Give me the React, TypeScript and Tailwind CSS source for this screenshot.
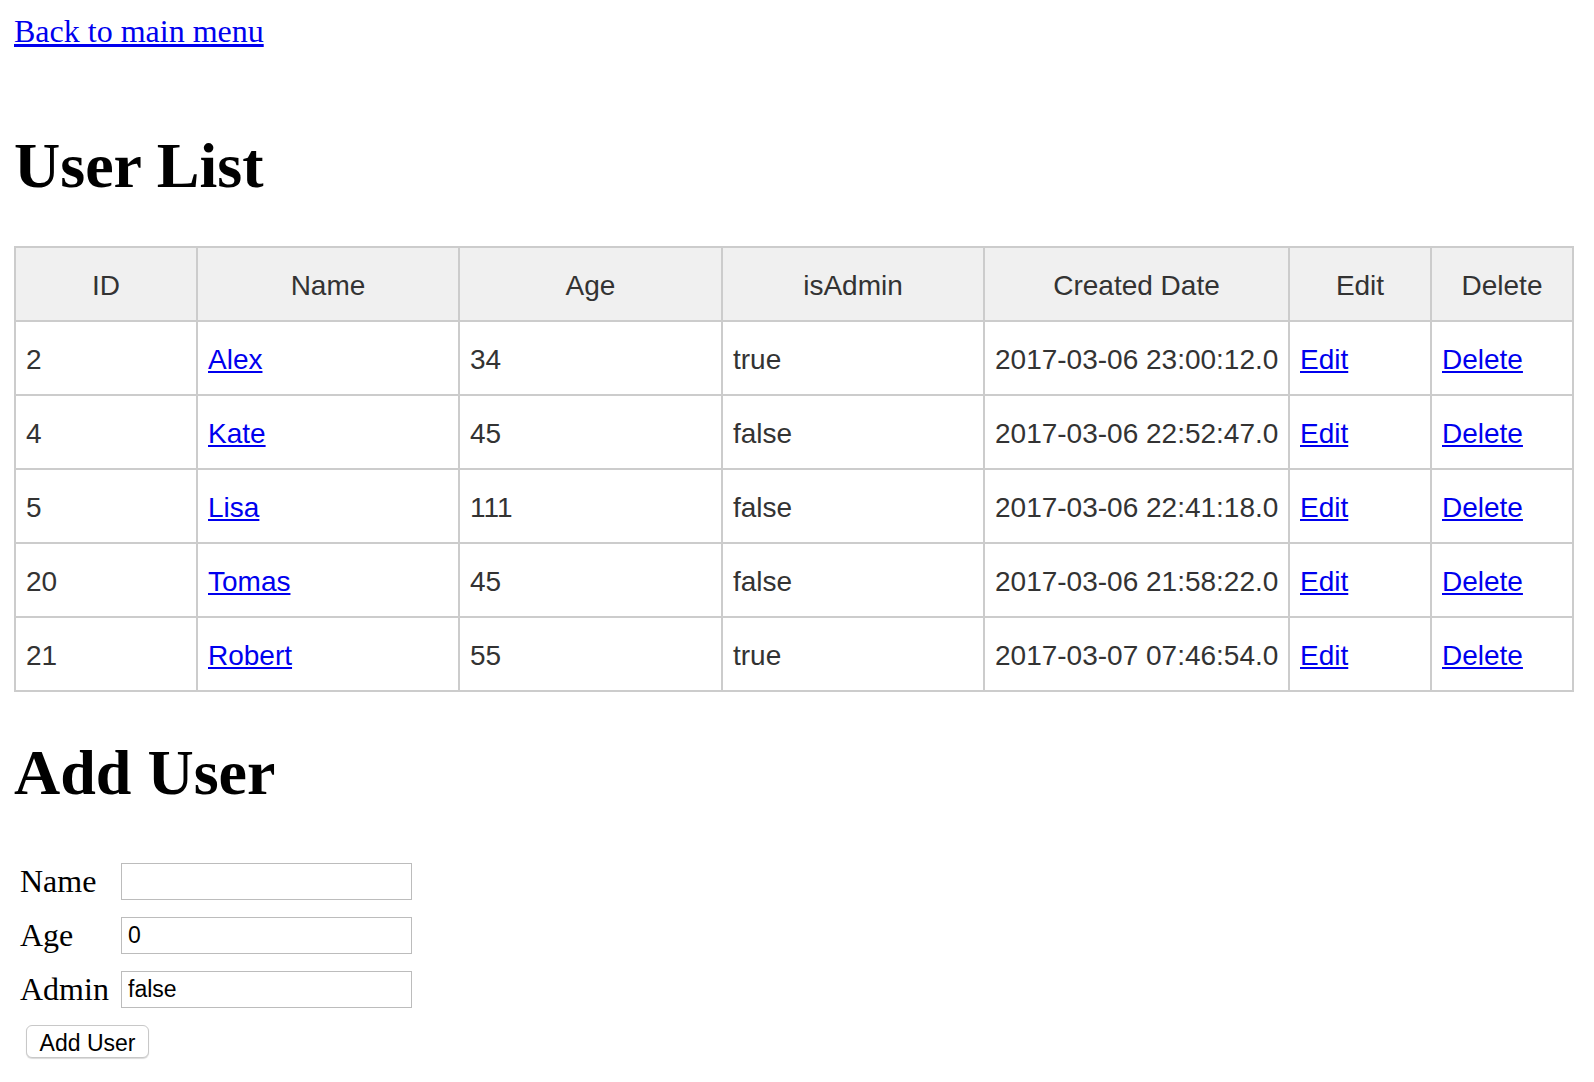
const users = [
  { id: 2, name: "Alex", age: 34, admin: "true", created: "2017-03-06 23:00:12.0" },
  { id: 4, name: "Kate", age: 45, admin: "false", created: "2017-03-06 22:52:47.0" },
  { id: 5, name: "Lisa", age: 111, admin: "false", created: "2017-03-06 22:41:18.0" },
  { id: 20, name: "Tomas", age: 45, admin: "false", created: "2017-03-06 21:58:22.0" },
  { id: 21, name: "Robert", age: 55, admin: "true", created: "2017-03-07 07:46:54.0" },
];

const th = "h-[74px] border-2 border-[#cccccc] bg-[#f0f0f0] px-[10px] pt-[3px] text-center font-normal";
const td = "h-[74px] border-2 border-[#cccccc] px-[10px] pt-[4px] text-left whitespace-nowrap";
const link = "text-[#0000ee] underline";
const input =
  "h-[37px] border border-[#bcbcbc] px-[6px] font-['Liberation_Sans',Arial,sans-serif] text-[23px] leading-normal text-black outline-none";

export default function App() {
  return (
    <div className="min-h-screen bg-white px-[14px] pt-[13px] pb-6 font-['Liberation_Serif',serif] text-black">
      <a href="#" className="block text-[32px] leading-[36px] text-[#0000ee] underline w-max">
        Back to main menu
      </a>

      <h1 className="mt-[81px] text-[64px] font-bold leading-[72px]">User List</h1>

      <table className="mt-[44px] w-[1558px] table-fixed border-collapse font-['Liberation_Sans',Arial,sans-serif] text-[28px] leading-[32px] text-[#333333]">
        <colgroup>
          <col className="w-[182px]" />
          <col className="w-[262px]" />
          <col className="w-[263px]" />
          <col className="w-[262px]" />
          <col className="w-[305px]" />
          <col className="w-[142px]" />
          <col className="w-[142px]" />
        </colgroup>
        <thead>
          <tr>
            <th className={th}>ID</th>
            <th className={th}>Name</th>
            <th className={th}>Age</th>
            <th className={th}>isAdmin</th>
            <th className={th}>Created Date</th>
            <th className={th}>Edit</th>
            <th className={th}>Delete</th>
          </tr>
        </thead>
        <tbody>
          {users.map((u) => (
            <tr key={u.id}>
              <td className={td}>{u.id}</td>
              <td className={td}>
                <a href="#" className={link}>{u.name}</a>
              </td>
              <td className={td}>{u.age}</td>
              <td className={td}>{u.admin}</td>
              <td className={td}>{u.created}</td>
              <td className={td}>
                <a href="#" className={link}>Edit</a>
              </td>
              <td className={td}>
                <a href="#" className={link}>Delete</a>
              </td>
            </tr>
          ))}
        </tbody>
      </table>

      <h1 className="mt-[45px] text-[64px] font-bold leading-[72px]">Add User</h1>

      <form className="ml-[6px] mt-[54px]" onSubmit={(e) => e.preventDefault()}>
        <div className="grid grid-cols-[89px_291px] items-center gap-x-[12px] gap-y-[17px] text-[32px] leading-[37px]">
          <label>Name</label>
          <input type="text" defaultValue="" className={input} />
          <label>Age</label>
          <input type="text" defaultValue="0" className={input} />
          <label>Admin</label>
          <input type="text" defaultValue="false" className={input} />
        </div>
        <button
          type="submit"
          className="ml-[6px] mt-[17px] h-[33px] w-[123px] rounded-[6px] border border-[#c8c8c8] bg-white font-['Liberation_Sans',Arial,sans-serif] text-[23px] leading-normal text-black shadow-[0_1px_1px_rgba(0,0,0,0.15)]"
        >
          Add User
        </button>
      </form>
    </div>
  );
}
